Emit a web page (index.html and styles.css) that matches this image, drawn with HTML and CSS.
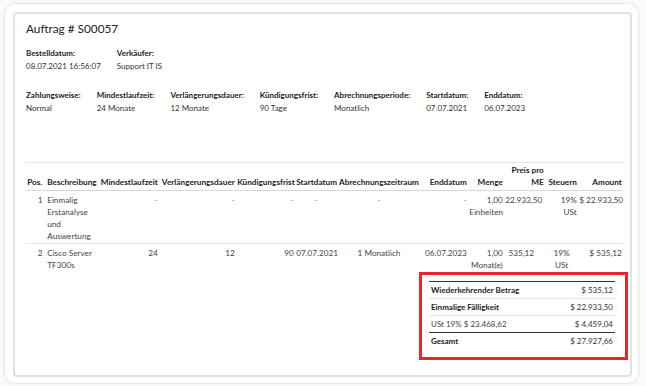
FILE: index.html
```html
<!DOCTYPE html>
<html lang="de">
<head>
<meta charset="utf-8">
<title>Auftrag # S00057</title>
<link rel="stylesheet" href="styles.css">
</head>
<body>
<div class="frame">
  <div class="card">
    <h1 class="title">Auftrag # S00057</h1>
    <div class="info info-top">
      <div class="field"><div class="label">Bestelldatum:</div><div class="value">08.07.2021 16:56:07</div></div>
      <div class="field"><div class="label">Verkäufer:</div><div class="value">Support IT IS</div></div>
    </div>
    <div class="info info-sub">
      <div class="field"><div class="label">Zahlungsweise:</div><div class="value">Normal</div></div>
      <div class="field"><div class="label">Mindestlaufzeit:</div><div class="value">24 Monate</div></div>
      <div class="field"><div class="label">Verlängerungsdauer:</div><div class="value">12 Monate</div></div>
      <div class="field"><div class="label">Kündigungsfrist:</div><div class="value">90 Tage</div></div>
      <div class="field"><div class="label">Abrechnungsperiode:</div><div class="value">Monatlich</div></div>
      <div class="field"><div class="label">Startdatum:</div><div class="value">07.07.2021</div></div>
      <div class="field"><div class="label">Enddatum:</div><div class="value">06.07.2023</div></div>
    </div>

    <table class="lines">
      <colgroup>
        <col class="c-pos"><col class="c-desc"><col class="c-min"><col class="c-ver"><col class="c-kue">
        <col class="c-start"><col class="c-abr"><col class="c-end"><col class="c-qty"><col class="c-price">
        <col class="c-tax"><col class="c-amt">
      </colgroup>
      <thead>
        <tr>
          <th class="l">Pos.</th>
          <th class="l">Beschreibung</th>
          <th class="r">Mindestlaufzeit</th>
          <th class="r">Verlängerungsdauer</th>
          <th class="r">Kündigungsfrist</th>
          <th class="l">Startdatum</th>
          <th class="c">Abrechnungszeitraum</th>
          <th class="r">Enddatum</th>
          <th class="r">Menge</th>
          <th class="r">Preis pro ME</th>
          <th class="r">Steuern</th>
          <th class="r">Amount</th>
        </tr>
      </thead>
      <tbody>
        <tr>
          <td class="r pos">1</td>
          <td class="l">Einmalig Erstanalyse und Auswertung</td>
          <td class="r dash">-</td>
          <td class="r dash">-</td>
          <td class="r dash">-</td>
          <td class="c dash">-</td>
          <td class="c dash">-</td>
          <td class="r dash">-</td>
          <td class="r">1,00<br>Einheiten</td>
          <td class="r price">22.933,50</td>
          <td class="r">19%<br>USt</td>
          <td class="r">$&nbsp;22.933,50</td>
        </tr>
        <tr>
          <td class="r pos">2</td>
          <td class="l">Cisco Server TF300s</td>
          <td class="r">24</td>
          <td class="r">12</td>
          <td class="r">90</td>
          <td class="c">07.07.2021</td>
          <td class="c">1 Monatlich</td>
          <td class="r">06.07.2023</td>
          <td class="r">1,00<br>Monat(e)</td>
          <td class="r price">535,12</td>
          <td class="c">19%<br>USt</td>
          <td class="r">$&nbsp;535,12</td>
        </tr>
      </tbody>
    </table>

    <div class="totals-row">
      <div class="totals-box">
        <table class="totals">
          <tr class="bold first"><td>Wiederkehrender Betrag</td><td class="amt">$ 535,12</td></tr>
          <tr class="bold"><td>Einmalige Fälligkeit</td><td class="amt">$ 22.933,50</td></tr>
          <tr><td>USt 19% $ 23.468,62</td><td class="amt">$ 4.459,04</td></tr>
          <tr class="bold total"><td>Gesamt</td><td class="amt">$ 27.927,66</td></tr>
        </table>
      </div>
    </div>
  </div>
</div>
</body>
</html>
```

FILE: styles.css
```css
* { box-sizing: border-box; }

html, body {
  margin: 0;
  padding: 0;
  background: #fafafa;
}

body {
  font-family: Lato, "Open Sans", "Liberation Sans", sans-serif;
  color: #444;
  width: 646px;
  height: 386px;
  overflow: hidden;
}

.frame {
  margin: 4px 8px 0 5px;
  width: 633px;
  height: 379px;
  padding: 8px 6px 6px 8px;
  background: #fff;
  border-radius: 10px;
  box-shadow: 0 0 3px rgba(0, 0, 0, 0.18);
}

.card {
  height: 100%;
  border: 2px solid #e2e2e2;
  border-radius: 4px;
  padding: 7px 8px 0 11px;
  background: #fff;
}

.title {
  margin: 0;
  font-size: 11.8px;
  line-height: 16px;
  font-weight: 400;
  color: #222;
}

.info {
  display: flex;
  gap: 16px;
  font-size: 8px;
  line-height: 12px;
}

.info-top { margin-top: 10px; }
.info-sub { margin-top: 17px; }

.label {
  font-weight: 700;
  color: #222;
}

.value {
  margin-top: 1px;
  color: #333;
}

.lines {
  margin-top: 48px;
  width: 597px;
  table-layout: fixed;
  border-collapse: collapse;
  border-top: 1px solid #e6e6e6;
  font-size: 8.2px;
  line-height: 12px;
}

.c-pos { width: 20px; }
.c-desc { width: 52px; }
.c-min { width: 61px; }
.c-ver { width: 77px; }
.c-kue { width: 59px; }
.c-start { width: 42px; }
.c-abr { width: 84px; }
.c-end { width: 47px; }
.c-qty { width: 36px; }
.c-price { width: 41px; }
.c-tax { width: 33px; }
.c-amt { width: 45px; }

.lines th {
  font-weight: 700;
  color: #222;
  vertical-align: bottom;
  padding: 1px 1.2px 2px;
  border-bottom: 1px solid #d8d8d8;
  white-space: normal;
}

.lines td {
  vertical-align: top;
  padding: 3px 1.2px 1px;
  color: #444;
  border-bottom: 1px solid #e6e6e6;
}

.lines tbody tr:last-child td {
  border-bottom: 0;
  padding-bottom: 0;
}

.lines .l { text-align: left; }
.lines .r { text-align: right; }
.lines .c { text-align: center; }
.lines td.pos { padding-right: 3.5px; }
.lines td.price { padding-right: 11px; }
.lines td.dash { color: #888; }

.totals-row {
  display: flex;
  justify-content: flex-end;
  margin-right: -6px;
  margin-top: 1px;
}

.totals-box {
  width: 209px;
  border: 3px solid #e8262b;
  padding: 6px 10px 8px 7px;
}

.totals {
  width: 100%;
  border-collapse: collapse;
  font-size: 8px;
  line-height: 12px;
  color: #444;
}

.totals td {
  padding: 2px;
  border-top: 1px solid #e6e6e6;
}

.totals tr.first td { border-top: 1.5px solid #333; }
.totals tr.total td { border-top: 1.5px solid #333; }

.totals tr.bold td:first-child {
  font-weight: 700;
  color: #222;
}

.totals td.amt {
  text-align: right;
  color: #333;
}
```
